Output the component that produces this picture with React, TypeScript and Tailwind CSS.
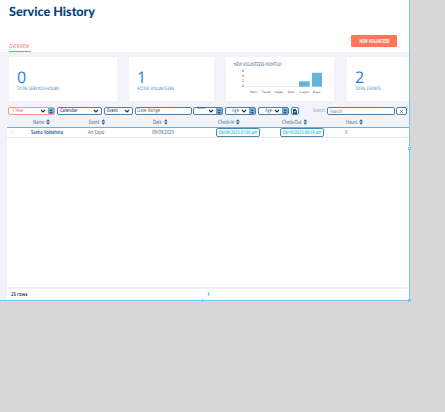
import type { ReactNode } from 'react';

function Chevron() {
  return (
    <svg viewBox="0 0 6 4" className="mr-[2px] h-[4px] w-[6px] shrink-0">
      <path d="M1 1L3 2.9L5 1" fill="none" stroke="#263747" strokeWidth="1.3" />
    </svg>
  );
}

function SortIcon({ className }: { className: string }) {
  return (
    <svg viewBox="0 0 4 6" preserveAspectRatio="none" className={`shrink-0 ${className}`}>
      <path d="M0 2.5L2 0.2L4 2.5ZM0 3.5L2 5.8L4 3.5Z" fill="#1e5f97" />
    </svg>
  );
}

function Select({ label, className, stepper = false, tone = '' }: { label: string; className: string; stepper?: boolean; tone?: string }) {
  return (
    <div className={`flex h-[8px] shrink-0 items-center rounded-[2px] border bg-white text-[5.3px] leading-none ${className}`}>
      <span className={`w-0 flex-1 origin-left scale-x-[0.76] whitespace-nowrap ${tone}`}>{label}</span>
      <Chevron />
      {stepper && (
        <div className="flex h-full w-[6px] shrink-0 items-center justify-center bg-[#82a9ca]">
          <SortIcon className="h-[5px] w-[4px]" />
        </div>
      )}
    </div>
  );
}

function Card({ className, children }: { className: string; children: ReactNode }) {
  return <div className={`h-[44px] shrink-0 rounded-[1px] bg-white ${className}`}>{children}</div>;
}

function Stat({ value, label }: { value: string; label: string }) {
  return (
    <div className="pt-[9px]">
      <div className="h-[19px] text-[16px] leading-[22px] text-[#1f7fe0]">{value}</div>
      <div className="origin-left scale-x-[0.8] pt-[1px] font-['Lato',sans-serif] text-[4.6px] leading-[5px] whitespace-nowrap text-[#4f79a3]">{label}</div>
    </div>
  );
}

const months = ['Mam', 'Tpaab', 'Yappa', 'Mam', 'Cxapm', 'Maya'];

function Chart() {
  return (
    <svg viewBox="0 0 108 44" className="h-[44px] w-[108px]">
      <text x="8" y="8.5" fontSize="5.1" fill="#466c93" textLength="48" lengthAdjust="spacingAndGlyphs" className="font-['Lato',sans-serif]">NEW VOLUNTEERS MONTHLY</text>
      <g fontSize="3.6" fill="#444" textAnchor="middle">
        {['6', '4', '2', '0'].map((n, i) => (
          <text key={n} x="17" y={14.8 + i * 5.2}>{n}</text>
        ))}
        {months.map((month, i) => (
          <text key={i} x={27.5 + i * 12.6} y="35.6" fontSize="3">{month}</text>
        ))}
      </g>
      <path d="M21.5 29.5H96" stroke="#ddd" strokeWidth="0.6" />
      <rect x="73" y="24.3" width="10.7" height="5.3" fill="#62b4d9" />
      <rect x="86" y="15.8" width="10" height="13.8" fill="#62b4d9" />
    </svg>
  );
}

function Heading({ label, className = '' }: { label: string; className?: string }) {
  return (
    <div className={`flex origin-left scale-x-[0.69] items-center gap-[3px] ${className}`}>
      <span className="pt-[1px] whitespace-nowrap">{label}</span>
      <SortIcon className="h-[6px] w-[5.5px]" />
    </div>
  );
}

function Cell({ children, className = '' }: { children: ReactNode; className?: string }) {
  return <span className={`origin-left scale-x-[0.72] ${className}`}>{children}</span>;
}

function TimeBox({ children }: { children: string }) {
  return (
    <div className="-ml-[2px] flex h-[9px] w-[44px] items-center rounded-[2px] border border-[#4b87b5] pt-[1px] pl-[2px] text-[#10bcd8]">
      <span className="w-0 origin-left scale-x-[0.77] text-[5px] font-semibold">{children}</span>
    </div>
  );
}

const columns = 'grid grid-cols-[26px_56px_64px_65px_64px_64px_63px]';

export default function App() {
  return (
    <div className="h-[412px] w-[445px] overflow-hidden bg-[#d7d7d7] font-['Open_Sans','Noto_Sans',sans-serif] [text-rendering:geometricPrecision]">
      <div className="relative flex h-[301px] w-[410px] flex-col border-r border-b border-[#75c8ed] bg-[#f2f3f8]">
        <header className="h-[52px] shrink-0 bg-white pl-[9px]">
          <h1 className="h-[35px] pt-[4px] font-['Lato',sans-serif] text-[12.6px] leading-[16px] font-black whitespace-nowrap text-[#06417e]">Service History</h1>
          <div className="flex h-[17px] justify-between pr-[12px]">
            <div className="mt-[7px] h-[10px] w-[22px] border-b border-[#f47c60] pt-[1px] text-[5.1px] leading-[8px] whitespace-nowrap text-[#f05a3c]">
              <div className="origin-left scale-x-[0.8]">OVERVIEW</div>
            </div>
            <button className="flex h-[12px] w-[46px] items-center justify-center rounded-[1px] bg-[#ff7757] pt-[1px] text-[4.8px] font-bold whitespace-nowrap text-white">
              <span className="scale-x-[0.73]">NEW VOLUNTEER</span>
            </button>
          </div>
        </header>

        <section className="flex h-[55px] shrink-0 pt-[5px] pl-[9px]">
          <Card className="mr-[12px] w-[108px] pl-[8px]"><Stat value="0" label="TOTAL SERVICES HOURS" /></Card>
          <Card className="mr-[12px] w-[85px] pl-[8px]"><Stat value="1" label="ACTIVE VOLUNTEERS" /></Card>
          <Card className="mr-[13px] w-[108px]"><Chart /></Card>
          <Card className="w-[62px] pl-[8px]"><Stat value="2" label="TOTAL EVENTS" /></Card>
        </section>

        <section className="flex h-[10px] shrink-0 items-start pl-[8px]">
          <Select label="1 Year" stepper className="mr-[2px] w-[47px] border-[#f59a86] pl-[3px] text-[#f05a3c]" />
          <Select label="Calendar" className="mr-[2px] w-[45px] border-[#4b7fac] pl-[2px] font-semibold text-[#15558f]" />
          <Select label="Event" className="mr-[2px] w-[29px] border-[#4b7fac] pl-[2px] font-semibold text-[#15558f]" />
          <div className="mr-[1px] flex h-[8px] w-[57px] shrink-0 items-center rounded-[2px] border border-[#4b7fac] bg-white pl-[1px] text-[5.3px] leading-none text-[#666]">
            <span className="origin-left scale-x-[0.82] whitespace-nowrap">Date Range</span>
          </div>
          <Select label="Status" stepper tone="-translate-y-[2.5px] text-[3.8px]" className="mr-[2px] w-[30px] border-[#4b7fac] pl-[3px] text-[#444]" />
          <Select label="Age" stepper className="mr-[2px] w-[31px] border-[#4b7fac] pl-[6px] text-[#666]" />
          <Select label="Age" stepper className="mr-[2px] w-[31px] border-[#4b7fac] pl-[6px] text-[#666]" />
          <button className="flex h-[8px] w-[8px] shrink-0 items-center justify-center rounded-[2px] border border-[#4b7fac] bg-white">
            <svg viewBox="0 0 4 5" className="h-[5px] w-[4px]">
              <path d="M0 0H2.6L4 1.4V5H0Z" fill="#164f8a" />
              <path d="M1.1 2.6H2.9M2 1.8V3.8" stroke="#fff" strokeWidth="0.5" />
            </svg>
          </button>
          <span className="ml-[14px] w-[14px] origin-left scale-x-[0.72] text-[5px] leading-[9px] whitespace-nowrap text-[#7093ba]">Search:</span>
          <div className="flex h-[8px] w-[68px] shrink-0 items-center rounded-[2px] border border-[#4b7fac] bg-white pt-[2px] pl-[2px] text-[4.8px] leading-none text-[#666]">
            <span className="origin-left scale-x-[0.82]">Search</span>
          </div>
          <button className="ml-[1px] flex h-[8px] w-[11px] shrink-0 items-center justify-center rounded-[2px] border border-[#4b7fac] bg-white">
            <svg viewBox="0 0 3 3" className="h-[3px] w-[3px]"><path d="M0.2 0.2L2.8 2.8M2.8 0.2L0.2 2.8" stroke="#245e99" strokeWidth="0.8" /></svg>
          </button>
        </section>

        <main className="ml-[7px] flex min-h-0 flex-1 flex-col bg-white">
          <div className={`${columns} h-[11px] shrink-0 border-b border-[#77add5] bg-[#f2f3f8] text-[5.8px] leading-none text-[#1f5a92]`}>
            <Heading label="Name" className="col-start-2" />
            <Heading label="Event" />
            <Heading label="Date" />
            <Heading label="Check-In" />
            <Heading label="Check-Out" />
            <Heading label="Hours" />
          </div>
          <div className={`${columns} h-[10px] shrink-0 items-center border-b border-[#e6e8eb] text-[5.7px] leading-none whitespace-nowrap text-[#1f5a92]`}>
            <span className="ml-[4px] h-[4px] w-[4px] border border-[#e6f4f8]" />
            <Cell className="-ml-[2px] scale-x-[0.66] font-semibold text-[#0d4c89]">Sasha Voloshina</Cell>
            <Cell className="-ml-[1px]">Art Expo</Cell>
            <Cell className="-ml-[1px]">09/09/2025</Cell>
            <TimeBox>09/09/2025 07:00 pm</TimeBox>
            <TimeBox>09/10/2025 08:59 pm</TimeBox>
            <Cell className="-ml-[1px]">0</Cell>
          </div>
          <div className="flex-1" />
          <footer className="flex h-[13px] shrink-0 items-center border-t-2 border-[#f0f0f1] pt-[1px] pl-[4px] text-[5.2px] leading-none">
            <span className="w-[196px] origin-left scale-x-[0.84] font-semibold text-[#222]">25 rows</span>
            <span className="text-[4.8px] font-bold text-[#22bddd]">1</span>
          </footer>
        </main>
        <i className="absolute -bottom-[2px] left-[201px] h-[3px] w-[3px] rounded-full border border-[#70caef]" />
        <i className="absolute top-[147px] -right-[2px] h-[3px] w-[3px] border border-[#70caef] bg-white" />
        <i className="absolute -right-[2px] -bottom-[2px] h-[3px] w-[3px] bg-[#70caef]" />
      </div>
    </div>
  );
}
